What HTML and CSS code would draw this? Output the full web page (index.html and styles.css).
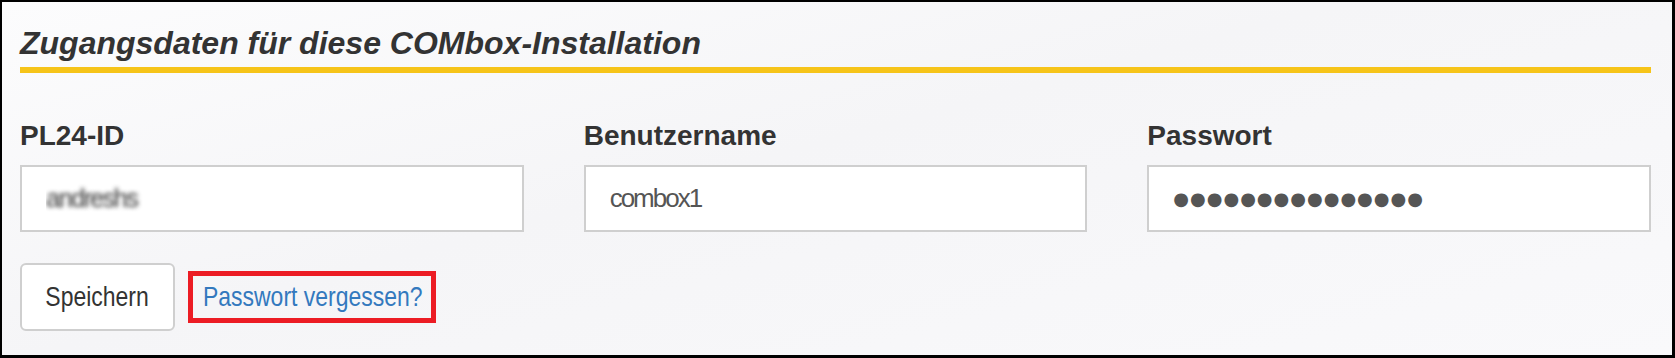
FILE: index.html
```html
<!DOCTYPE html>
<html>
<head>
    <title>COMbox Zugangsdaten</title>
    <meta charset="UTF-8">
    <link rel="stylesheet" href="styles.css">
</head>
<body>
    <div class="panel">
        <h2 class="panel-title">Zugangsdaten für diese COMbox-Installation</h2>
        <form id="credentialsForm" class="fields">
            <div class="form-group">
                <label for="pl24_id">PL24-ID</label>
                <input type="text" id="pl24_id" class="blurred" value="andreshs" readonly>
            </div>
            <div class="form-group">
                <label for="username">Benutzername</label>
                <input type="text" id="username" value="combox1" readonly>
            </div>
            <div class="form-group">
                <label for="password">Passwort</label>
                <input type="text" id="password" class="dots" value="●●●●●●●●●●●●●●●" readonly>
            </div>
        </form>
        <div class="actions">
            <button type="submit" form="credentialsForm"><span class="narrow">Speichern</span></button>
            <span class="highlight"><a href="#" class="narrow">Passwort vergessen?</a></span>
        </div>
    </div>
</body>
</html>
```

FILE: styles.css
```css
html, body {
    margin: 0;
    padding: 0;
    background: #000;
}
body {
    font-family: "Liberation Sans", Arial, sans-serif;
    color: #333;
}
.panel {
    height: 353px;
    border-style: solid;
    border-color: #000;
    border-width: 2px 3px 3px 2px;
    padding: 0 21px 0 18px;
    background: linear-gradient(165deg, #fcfcfd 0%, #f5f5f7 45%, #f9f9fb 100%);
    overflow: hidden;
}
.panel-title {
    margin: 0;
    padding: 24px 0 7px 0;
    font-size: 32px;
    line-height: 34px;
    font-weight: bold;
    font-style: italic;
    color: #333;
    border-bottom: 6px solid #f6c419;
}
.fields {
    display: grid;
    grid-template-columns: repeat(3, 1fr);
    column-gap: 60px;
    margin-top: 47px;
}
label {
    display: block;
    margin-bottom: 13px;
    font-size: 28px;
    line-height: 32px;
    font-weight: bold;
    color: #333;
}
input {
    display: block;
    width: 100%;
    height: 67px;
    box-sizing: border-box;
    padding: 0 24px;
    border: 2px solid #cfcfcf;
    border-radius: 0;
    background: #fff;
    font-family: "Liberation Sans", Arial, sans-serif;
    font-size: 26px;
    letter-spacing: -2px;
    color: #555;
    outline: none;
}
input.blurred {
    color: transparent;
    text-shadow: 0 0 4px rgba(40, 40, 40, 0.9);
}
input.dots {
    font-family: "DejaVu Sans", sans-serif;
    font-size: 18px;
    letter-spacing: 1px;
}
.actions {
    display: flex;
    align-items: center;
    gap: 13px;
    margin-top: 31px;
}
.narrow {
    display: inline-block;
    transform: scaleX(0.82);
}
button {
    width: 155px;
    height: 68px;
    padding: 0;
    border: 2px solid #cfcfcf;
    border-radius: 6px;
    background: #fff;
    font-family: "Liberation Sans", Arial, sans-serif;
    font-size: 28px;
    color: #333;
    cursor: pointer;
}
.highlight {
    display: inline-flex;
    align-items: center;
    box-sizing: border-box;
    width: 248px;
    height: 52px;
    padding: 0 10px;
    border: 5px solid #ec1c24;
}
.highlight a {
    font-size: 28px;
    color: #3379be;
    text-decoration: none;
    white-space: nowrap;
    transform-origin: left center;
}
```
